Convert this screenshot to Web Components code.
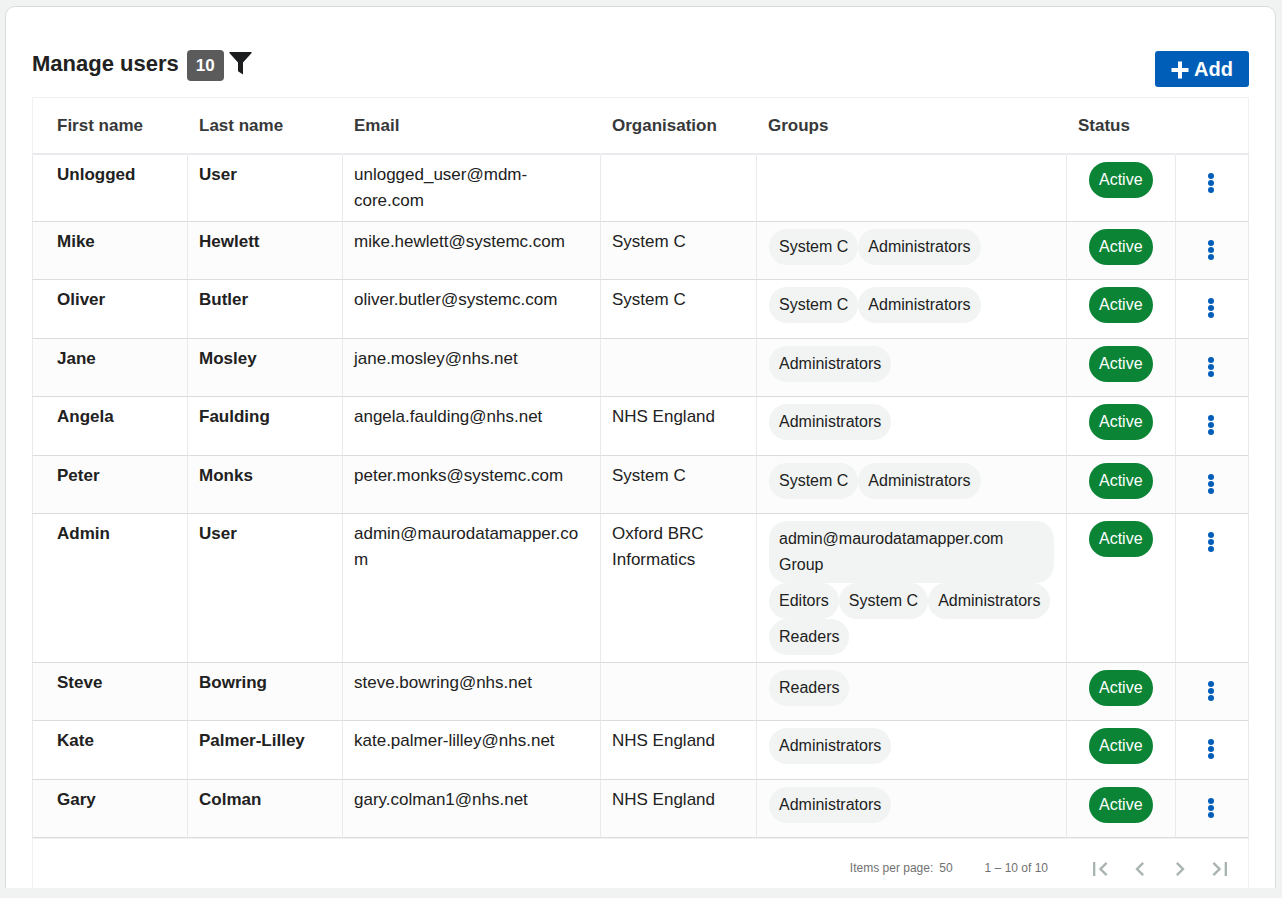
<!DOCTYPE html>
<html lang="en">
<head>
<meta charset="utf-8">
<meta name="viewport" content="width=device-width, initial-scale=1">
<title>Manage users</title>
<style>
  :root {
    --blue: #005eb8;
    --green: #0b8436;
    --ink: #212121;
    --surface: #f1f3f3;
    --chip: #f1f4f3;
    --grid: #e9eaee;
    --rule: #dcdcde;
    --outline: #f0f1f3;
  }
  body {
    margin: 0;
    background: var(--surface);
    color: var(--ink);
    font: 17px/26px "Liberation Sans", Arial, sans-serif;
  }
</style>
</head>
<body>
<app-shell>
  <page-header slot="header" heading="Manage users" count="10"></page-header>
  <users-table></users-table>
  <table-pager></table-pager>
</app-shell>

<script>
const define = (name, html, setup) => {
  const template = document.createElement('template');
  template.innerHTML = html;
  customElements.define(name, class extends HTMLElement {
    constructor() {
      super();
      this.attachShadow({ mode: 'open' }).append(template.content.cloneNode(true));
    }
    connectedCallback() {
      if (setup && !this.ready) { this.ready = true; setup(this, this.shadowRoot); }
    }
  });
};

define('app-shell', `
  <style>
    :host { display: flex; box-sizing: border-box; height: calc(100vh - 10px); padding: 6px 6px 0 5px; overflow: hidden; }
    main { flex: 1; min-width: 0; align-self: flex-start; box-sizing: border-box; min-height: 100vh; padding: 43px 26px 26px;
      background: #fff; border: 1px solid #d8dddc; border-radius: 10px; }
    section { border: 1px solid var(--outline); }
  </style>
  <main><slot name="header"></slot><section><slot></slot></section></main>`);

define('page-header', `
  <style>
    :host { display: flex; justify-content: space-between; align-items: flex-start; padding-bottom: 10px; }
    .title { display: flex; align-items: flex-start; }
    h1 { margin: 0; font-size: 22px; line-height: 28px; }
    .count { margin: 0 5px 0 8px; padding: 0 9px; min-width: 19px; border-radius: 4px; background: #5b5b5b; color: #fff;
      font-weight: bold; line-height: 31px; text-align: center; }
    button { border: 0; padding: 0; background: none; font: inherit; cursor: pointer; }
    .filter { display: flex; padding-top: 2px; }
    .add { display: flex; align-items: center; gap: 5px; height: 36px; padding: 0 16px; border-radius: 3px;
      background: var(--blue); color: #fff; font-weight: bold; font-size: 20px; margin-top: 1px; }
    .add svg { margin-top: 2px; }
  </style>
  <div class="title">
    <h1></h1><span class="count"></span>
    <button class="filter" type="button" aria-label="Filter users">
      <svg width="23" height="23" viewBox="0 0 23 23"><path fill="#1c1d1f" d="M.4 0h22.2v1L14 10.500V22.400l-5-3.200V10.500L.4 1z"/></svg>
    </button>
  </div>
  <button class="add" type="button">
    <svg width="18" height="18" viewBox="0 0 18 18" aria-hidden="true"><path fill="#fff" d="M7 .5h4V7h6.500v4H11v6.500H7V11H.5V7H7z"/></svg>
    <span>Add</span>
  </button>`, (host, root) => {
  root.querySelector('h1').textContent = host.getAttribute('heading');
  root.querySelector('.count').textContent = host.getAttribute('count');
});

define('group-chip', `
  <style>
    :host { display: block; padding: 5px 10px; border-radius: 18px; background: var(--chip); font-size: 16px; line-height: 26px; }
  </style><slot></slot>`);

define('status-pill', `
  <style>
    :host { display: inline-block; vertical-align: top; padding: 5px 10px; border-radius: 18px; background: var(--green);
      color: #fff; font-size: 16px; line-height: 26px; }
  </style><slot></slot>`);

define('row-menu', `
  <style>
    :host { display: flex; justify-content: center; }
    button { display: flex; align-items: center; justify-content: center; width: 36px; height: 36px; padding: 0; border: 0; background: none; cursor: pointer; }
  </style>
  <button type="button" aria-label="Row actions">
    <svg width="8" height="20" viewBox="0 0 8 20" fill="#005eb8"><circle cx="4" cy="3" r="3"/><circle cx="4" cy="10" r="3"/><circle cx="4" cy="17" r="3"/></svg>
  </button>`);

const users = [
  ['Unlogged', 'User', 'unlogged_user@mdm-core.com', '', []],
  ['Mike', 'Hewlett', 'mike.hewlett@systemc.com', 'System C', ['System C', 'Administrators']],
  ['Oliver', 'Butler', 'oliver.butler@systemc.com', 'System C', ['System C', 'Administrators']],
  ['Jane', 'Mosley', 'jane.mosley@nhs.net', '', ['Administrators']],
  ['Angela', 'Faulding', 'angela.faulding@nhs.net', 'NHS England', ['Administrators']],
  ['Peter', 'Monks', 'peter.monks@systemc.com', 'System C', ['System C', 'Administrators']],
  ['Admin', 'User', 'admin@maurodatamapper.com', 'Oxford BRC Informatics',
    ['admin@maurodatamapper.com Group', 'Editors', 'System C', 'Administrators', 'Readers']],
  ['Steve', 'Bowring', 'steve.bowring@nhs.net', '', ['Readers']],
  ['Kate', 'Palmer-Lilley', 'kate.palmer-lilley@nhs.net', 'NHS England', ['Administrators']],
  ['Gary', 'Colman', 'gary.colman1@nhs.net', 'NHS England', ['Administrators']]
];

define('users-table', `
  <style>
    :host { display: block; margin: 0 -1px; }
    table { width: 100%; table-layout: fixed; border-collapse: separate; border-spacing: 0; }
    .name { width: 155px; } .email { width: 258px; } .org { width: 156px; }
    .groups { width: 310px; } .status { width: 109px; } .menu { width: 74px; }
    th, td { box-sizing: border-box; padding: 7px 12px 7px 11px; text-align: left; vertical-align: top; }
    th:first-child, td:first-child { padding-left: 24px; }
    td:nth-child(5) { padding-left: 12px; }
    thead th { height: 57px; border-bottom: 2px solid var(--grid); color: #37383a; vertical-align: middle; }
    tbody tr { height: 58px; }
    tbody tr:nth-child(odd) { height: 59px; }
    tbody tr:nth-child(even) { background: #fcfcfc; }
    td, tbody th { border-left: 1px solid var(--grid); border-bottom: 1px solid var(--rule); overflow-wrap: anywhere; }
    thead th { border-left: 1px solid transparent; }
    td:last-child { border-right: 1px solid var(--grid); padding: 10px 3px 7px 0; }
    td:nth-child(6) { padding-left: 22px; padding-right: 0; }
    .chips { display: flex; flex-wrap: wrap; align-items: flex-start; }
  </style>
  <table>
    <colgroup><col class="name"><col class="name"><col class="email"><col class="org"><col class="groups"><col class="status"><col class="menu"></colgroup>
    <thead><tr><th scope="col">First name</th><th scope="col">Last name</th><th scope="col">Email</th><th scope="col">Organisation</th><th scope="col">Groups</th><th scope="col">Status</th><th></th></tr></thead>
    <tbody></tbody>
  </table>`, (host, root) => {
  root.querySelector('tbody').innerHTML = users.map(([first, last, email, org, groups]) => `
    <tr><th scope="row">${first}</th><th scope="row">${last}</th><td>${email}</td><td>${org}</td>
      <td><div class="chips">${groups.map(g => `<group-chip>${g}</group-chip>`).join('')}</div></td>
      <td><status-pill>Active</status-pill></td><td><row-menu></row-menu></td></tr>`).join('');
});

define('table-pager', `
  <style>
    :host { display: flex; align-items: center; justify-content: flex-end; height: 58px; padding-right: 8px;
      border-top: 1px solid var(--outline); color: #717171; font-size: 12px; }
    .size { display: flex; gap: 6px; }
    .range { margin: 0 32px; }
    nav { display: flex; padding-top: 2px; }
    button { display: flex; align-items: center; justify-content: center; width: 40px; height: 40px; padding: 0; border: 0; background: none; }
    svg { width: 28px; height: 28px; fill: #a9b3b1; }
  </style>
  <span class="size"><span>Items per page:</span><span>50</span></span><span class="range">1 – 10 of 10</span>
  <nav aria-label="Pages">
    <button type="button" disabled aria-label="First page"><svg viewBox="0 0 24 24"><path d="M18.410 16.590L13.820 12l4.590-4.590L17 6l-6 6 6 6zM6 6h2v12H6z"/></svg></button>
    <button type="button" disabled aria-label="Previous page"><svg viewBox="0 0 24 24"><path d="M15.410 7.410L14 6l-6 6 6 6 1.410-1.410L10.830 12z"/></svg></button>
    <button type="button" disabled aria-label="Next page"><svg viewBox="0 0 24 24"><path d="M10 6L8.590 7.410 13.170 12l-4.580 4.590L10 18l6-6z"/></svg></button>
    <button type="button" disabled aria-label="Last page"><svg viewBox="0 0 24 24"><path d="M5.590 7.410L10.180 12l-4.590 4.590L7 18l6-6-6-6zM16 6h2v12h-2z"/></svg></button>
  </nav>`);
</script>
</body>
</html>
